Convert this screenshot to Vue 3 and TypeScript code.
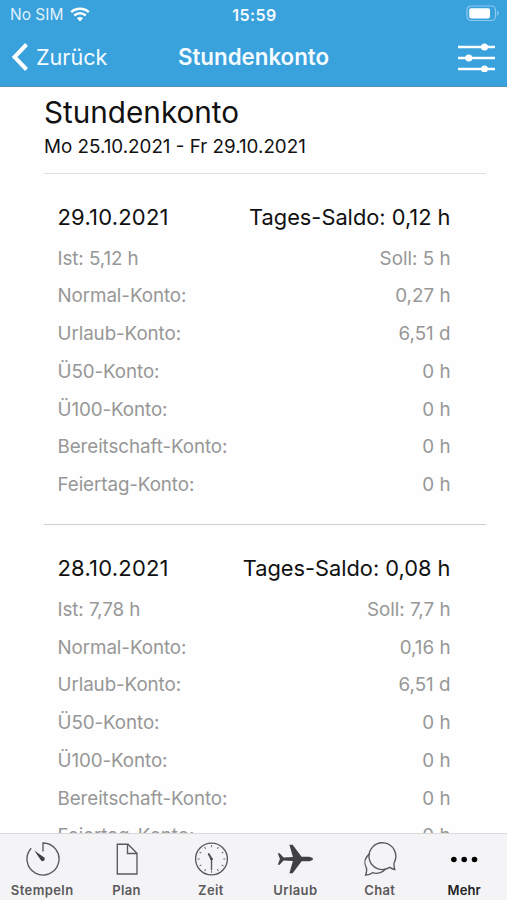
<script setup lang="ts">
interface Account {
  label: string
  value: string
}
interface Day {
  date: string
  saldo: string
  accounts: Account[]
}

const days: Day[] = [
  {
    date: '29.10.2021',
    saldo: 'Tages-Saldo: 0,12 h',
    accounts: [
      { label: 'Ist: 5,12 h', value: 'Soll: 5 h' },
      { label: 'Normal-Konto:', value: '0,27 h' },
      { label: 'Urlaub-Konto:', value: '6,51 d' },
      { label: 'Ü50-Konto:', value: '0 h' },
      { label: 'Ü100-Konto:', value: '0 h' },
      { label: 'Bereitschaft-Konto:', value: '0 h' },
      { label: 'Feiertag-Konto:', value: '0 h' },
    ],
  },
  {
    date: '28.10.2021',
    saldo: 'Tages-Saldo: 0,08 h',
    accounts: [
      { label: 'Ist: 7,78 h', value: 'Soll: 7,7 h' },
      { label: 'Normal-Konto:', value: '0,16 h' },
      { label: 'Urlaub-Konto:', value: '6,51 d' },
      { label: 'Ü50-Konto:', value: '0 h' },
      { label: 'Ü100-Konto:', value: '0 h' },
      { label: 'Bereitschaft-Konto:', value: '0 h' },
      { label: 'Feiertag-Konto:', value: '0 h' },
    ],
  },
]

const clockTicks = Array.from({ length: 12 }, (_, i) => i * 30)
</script>

<template>
  <div class="screen">
    <header class="top">
      <div class="status">
        <div class="carrier">
          <span>No SIM</span>
          <svg class="wifi" width="20" height="15" viewBox="0 0 20 15">
            <path d="M1.2 5.2C6.1.6 13.9.6 18.8 5.2" />
            <path d="M4.2 8.5C7.5 5.5 12.5 5.5 15.8 8.5" />
            <path class="dot" d="M10 14.6 6.9 11.3C8.7 9.7 11.3 9.7 13.1 11.3Z" />
          </svg>
        </div>
        <span class="time">15:59</span>
        <svg class="battery" width="34" height="17" viewBox="0 0 34 17">
          <rect x="1" y="1" width="28.5" height="14.5" rx="4" />
          <rect class="charge" x="3.2" y="3.2" width="20.8" height="10.2" rx="1.8" />
          <path class="cap" d="M31.2 5.8C33.2 6.5 33.2 10 31.2 10.7Z" />
        </svg>
      </div>
      <nav class="nav">
        <button class="back">
          <svg width="17" height="28" viewBox="0 0 17 28"><path d="M15.5 1.5 3.5 14 15.5 26.5" /></svg>
          <span>Zurück</span>
        </button>
        <span class="nav-title">Stundenkonto</span>
        <button class="filter">
          <svg width="37" height="29" viewBox="0 0 37 29">
            <path d="M0 4H37M0 15H37M0 26H37" />
            <circle cx="26.5" cy="4" r="3.5" />
            <circle cx="10.8" cy="15" r="3.5" />
            <circle cx="26.5" cy="26" r="3.5" />
          </svg>
        </button>
      </nav>
    </header>

    <main class="content">
      <div class="intro">
        <h1>Stundenkonto</h1>
        <p>Mo 25.10.2021 - Fr 29.10.2021</p>
      </div>
      <section v-for="day in days" :key="day.date" class="day">
        <div class="day-head">
          <span class="date">{{ day.date }}</span>
          <span>{{ day.saldo }}</span>
        </div>
        <div v-for="account in day.accounts" :key="account.label" class="row">
          <span class="label">{{ account.label }}</span>
          <span>{{ account.value }}</span>
        </div>
      </section>
    </main>

    <footer class="tabs">
      <div class="tab">
        <svg width="36" height="36" viewBox="0 0 36 36">
          <path d="M19 10.5V2A16 16 0 1 1 7.200 7.200" />
          <path class="solid" d="M10.300 9.500 20.200 16.600A2.100 2.100 0 1 1 17.100 19.500Z" />
        </svg>
        <span>Stempeln</span>
      </div>
      <div class="tab">
        <svg width="36" height="36" viewBox="0 0 36 36">
          <path d="M8.3 3.200H19L28 12.200V33H8.300ZM18.500 3.200V12.500H28" />
        </svg>
        <span>Plan</span>
      </div>
      <div class="tab">
        <svg width="36" height="36" viewBox="0 0 36 36">
          <circle cx="18.5" cy="18" r="15.9" />
          <path
            v-for="angle in clockTicks"
            :key="angle"
            class="tick"
            d="M18.5 4.2V6.2"
            :transform="`rotate(${angle} 18.5 18)`"
          />
          <path d="M15.3 12.3 18.5 18V29.3" />
          <path class="hand" d="M15.6 12.7 18.5 18" />
          <circle class="solid" cx="18.5" cy="18" r="1.3" />
        </svg>
        <span>Zeit</span>
      </div>
      <div class="tab">
        <svg width="36" height="36" viewBox="0 0 36 36">
          <path
            class="solid"
            d="M.8 12.2H2.600L6.600 16.400 15.900 16 12.400 3.700H15.600L24.600 15.700H32.100Q36 16.500 36 18 36 19.500 32.100 20.300H24.600L15.600 32.300H12.400L15.900 20 6.600 19.600 2.600 23.800H.8L2.900 18Z"
          />
        </svg>
        <span>Urlaub</span>
      </div>
      <div class="tab">
        <svg width="36" height="36" viewBox="0 0 36 36">
          <path
            d="M32.8 28.5C30.800 28.300 29.100 27.500 27.700 26.400A13.400 13.400 0 1 1 32.200 21.500C31.700 23.500 32 26 32.800 28.500Z"
          />
          <path
            d="M8 12.600C2.700 16.500 1.500 22.200 4.500 27.300 5.100 29.200 4.400 31.800 3.600 34.200 6.200 33.900 8.700 33.200 10.500 31.700 15 33.200 20.500 31.800 23.500 28"
          />
        </svg>
        <span>Chat</span>
      </div>
      <div class="tab active">
        <svg width="36" height="36" viewBox="0 0 36 36">
          <circle class="solid" cx="7.9" cy="18.5" r="2.8" />
          <circle class="solid" cx="18.2" cy="18.5" r="2.8" />
          <circle class="solid" cx="28.5" cy="18.5" r="2.8" />
        </svg>
        <span>Mehr</span>
      </div>
    </footer>
  </div>
</template>

<style>
body {
  background: #fff;
}
</style>

<style scoped>
.screen {
  display: flex;
  flex-direction: column;
  height: 900px;
  overflow: hidden;
  background: #fefefe;
  color: #111;
  font-family: Inter, 'Liberation Sans', sans-serif;
}
.top {
  box-sizing: border-box;
  flex: none;
  height: 87px;
  background: #39a1dc;
  border-bottom: 1px solid #4d90b8;
  color: #f4fbff;
}
.status {
  display: grid;
  grid-template-columns: 1fr auto 1fr;
  align-items: center;
  height: 29px;
  padding: 0 8px 0 10px;
  font-size: 15.5px;
}
.carrier {
  display: flex;
  align-items: center;
  gap: 7px;
}
.carrier span {
  opacity: 0.9;
}
.wifi {
  fill: none;
  stroke: #fff;
  stroke-width: 2.4;
}
.wifi .dot {
  fill: #fff;
  stroke: none;
}
.time {
  font-size: 16px;
  font-weight: 600;
  letter-spacing: 0.5px;
}
.battery {
  justify-self: end;
  margin-top: -2px;
  margin-right: -1px;
  fill: none;
  stroke: #8ccaf0;
  stroke-width: 1.2;
}
.battery .charge {
  fill: #fff;
  stroke: none;
}
.battery .cap {
  fill: #8ccaf0;
  stroke: none;
}
.nav {
  display: grid;
  grid-template-columns: 1fr auto 1fr;
  align-items: center;
  height: 55px;
  padding: 0 12px 0 11px;
}
button {
  display: flex;
  align-items: center;
  padding: 0;
  border: 0;
  background: none;
  color: inherit;
  font: inherit;
}
.back {
  gap: 8px;
  font-size: 21.6px;
}
.back svg {
  fill: none;
  stroke: #fff;
  stroke-width: 4;
}
.nav-title {
  margin-left: 1px;
  font-size: 22.3px;
  font-weight: 600;
}
.filter {
  justify-self: end;
}
.filter svg {
  margin-top: 2px;
  fill: #fff;
  stroke: #fff;
  stroke-width: 2.6;
}
.filter circle {
  stroke: none;
}
.content {
  flex: 1;
  min-height: 0;
  overflow: hidden;
  padding: 7px 21px 0 44px;
}
.intro {
  height: 79px;
  border-bottom: 1px solid #dedede;
}
h1 {
  margin: 0;
  font-size: 29.7px;
  font-weight: 400;
  line-height: 37px;
}
.intro p {
  margin: 3px 0 0;
  font-size: 18.8px;
  line-height: 26px;
}
.day {
  box-sizing: border-box;
  height: 351.3px;
  padding: 23px 35.5px 0 13.5px;
  border-bottom: 1px solid #cfcfcf;
}
.day-head,
.row {
  display: flex;
  justify-content: space-between;
}
.day-head {
  height: 42.7px;
  font-size: 21.8px;
  line-height: 41px;
}
.date {
  font-size: 22px;
  letter-spacing: 0.2px;
}
.row {
  height: 37.75px;
  color: #979797;
  font-size: 18.8px;
  line-height: 37.75px;
}
.label {
  letter-spacing: -0.08px;
}
.tabs {
  display: grid;
  box-sizing: border-box;
  grid-template-columns: repeat(6, 84.4px);
  flex: none;
  height: 67px;
  border-top: 1px solid #d8d8d9;
  background: #f4f3f5;
  color: #5a5a5c;
}
.tab {
  display: flex;
  flex-direction: column;
  align-items: center;
  padding-top: 7px;
  font-size: 13px;
  font-weight: 600;
  line-height: 18px;
  letter-spacing: 0.4px;
}
.tab span {
  margin-top: 4px;
}
.tab svg {
  fill: none;
  stroke: #59595b;
  stroke-width: 1.35;
}
.tab .solid {
  fill: #414143;
  stroke: none;
}
.tab .tick {
  stroke-width: 0.9;
}
.tab .hand {
  stroke-width: 2;
}
.active {
  color: #222;
  letter-spacing: 0.1px;
}
.active .solid {
  fill: #000;
}
</style>
